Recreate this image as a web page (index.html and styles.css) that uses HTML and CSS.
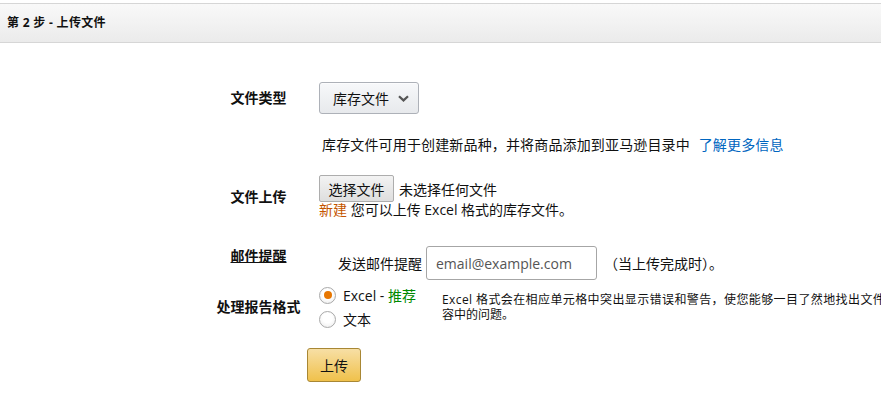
FILE: index.html
```html
<!DOCTYPE html>
<html lang="zh-CN">
<head>
<meta charset="utf-8">
<title>上传文件</title>
<link rel="stylesheet" href="styles.css">
</head>
<body>
<div class="page">
  <div class="step-header">第 2 步 - 上传文件</div>
  <form class="upload-form">
    <div class="label row-type">文件类型</div>
    <div class="value row-type">
      <button type="button" class="select-btn">库存文件
        <svg class="chevron" width="11" height="7" viewBox="0 0 11 7"><path d="M1 1.2 L5.5 5.4 L10 1.2" fill="none" stroke="#555" stroke-width="2.2"/></svg>
      </button>
    </div>

    <div class="label row-desc"></div>
    <div class="value row-desc desc">库存文件可用于创建新品种，并将商品添加到亚马逊目录中 <a class="link" href="#">了解更多信息</a></div>

    <div class="label row-file">文件上传</div>
    <div class="value row-file">
      <div class="file-line"><button type="button" class="file-btn">选择文件</button><span class="file-status">未选择任何文件</span></div>
      <div class="file-note"><span class="new">新建</span> 您可以上传 Excel 格式的库存文件。</div>
    </div>

    <div class="label row-mail"><span class="underlined">邮件提醒</span></div>
    <div class="value row-mail mail-line">
      <span class="mail-text">发送邮件提醒</span>
      <input class="mail-input" type="text" placeholder="email@example.com">
      <span class="mail-after">（当上传完成时）。</span>
    </div>

    <div class="label row-format">处理报告格式</div>
    <div class="value row-format format">
      <div class="radios">
        <label class="radio-line"><span class="radio checked"></span><span>Excel - <span class="rec">推荐</span></span></label>
        <label class="radio-line"><span class="radio"></span><span>文本</span></label>
      </div>
      <div class="format-desc"><span class="desc-first">Excel 格式会在相应单元格中突出显示错误和警告，使您能够一目了然地找出文件内</span><br>容中的问题。</div>
    </div>

    <div class="value row-submit">
      <button type="button" class="upload-btn">上传</button>
    </div>
  </form>
</div>
</body>
</html>
```

FILE: styles.css
```css
html, body {
  margin: 0;
  padding: 0;
  background: #fff;
  overflow: hidden;
}
body {
  font-family: "Open Sans", "Noto Sans CJK SC", sans-serif;
  font-size: 14px;
  color: #111;
}
.page {
  padding-top: 3px;
  width: 881px;
  overflow: hidden;
}
.step-header {
  height: 38px;
  line-height: 38px;
  border-top: 1px solid #d6d6d6;
  border-bottom: 1px solid #d6d6d6;
  background: linear-gradient(#f9f9f9, #ebebeb);
  padding-left: 7px;
  font-size: 12px;
  font-weight: bold;
  letter-spacing: 0.3px;
  width: 1000px;
}
.upload-form {
  display: grid;
  grid-template-columns: 119px auto;
  padding-left: 199px;
  margin-top: 39px;
  align-items: center;
}
.label {
  grid-column: 1;
  text-align: center;
  font-weight: bold;
  font-size: 14px;
  line-height: 20px;
}
.value {
  grid-column: 2;
  padding-left: 1px;
}
.select-btn {
  display: flex;
  align-items: center;
  height: 32px;
  width: 100px;
  padding: 0 0 0 13px;
  border: 1px solid #adb1b8;
  border-radius: 3px;
  background: linear-gradient(#f7f8fa, #e7e9ec);
  font-family: inherit;
  font-size: 14px;
  color: #111;
  gap: 9px;
  box-shadow: 0 1px 0 rgba(255,255,255,.6) inset;
}
.chevron {
  display: block;
}
.row-desc {
  margin-top: 21px;
  line-height: 20px;
}
.desc {
  padding-left: 4px;
  letter-spacing: 0.15px;
}
.link {
  color: #0066c0;
  text-decoration: none;
  margin-left: 5px;
}
.row-file {
  margin-top: 20px;
}
.file-line {
  display: flex;
  align-items: center;
  height: 27px;
}
.file-btn {
  height: 27px;
  width: 75px;
  padding: 0;
  border: 1px solid #adadad;
  border-radius: 2px;
  background: linear-gradient(#f3f3f3, #dedede);
  font-family: inherit;
  font-size: 14px;
  color: #111;
}
.file-status {
  margin-left: 5px;
}
.file-note {
  line-height: 16px;
}
.new {
  color: #c45500;
}
.row-mail {
  margin-top: 28px;
}
.label.row-mail {
  align-self: start;
  padding-top: 0;
}
.underlined {
  text-decoration: underline;
}
.mail-line {
  display: flex;
  align-items: center;
}
.mail-text {
  margin-left: 19px;
}
.mail-input {
  box-sizing: border-box;
  width: 171px;
  height: 34px;
  margin-left: 4px;
  padding: 0 9px;
  border: 1px solid #a6a6a6;
  border-radius: 3px;
  font-family: "Open Sans", sans-serif;
  font-size: 14px;
  color: #111;
}
.mail-input::placeholder {
  color: #555;
}
.mail-after {
  margin-left: 7px;
}
.row-format {
  margin-top: 3px;
}
.format {
  display: flex;
  align-items: center;
}
.radios {
  width: 123px;
  flex: none;
}
.radio-line {
  display: flex;
  align-items: center;
  height: 24px;
  gap: 7px;
}
.radio {
  box-sizing: border-box;
  width: 17px;
  height: 17px;
  border-radius: 50%;
  border: 1px solid #a9a9a9;
  background: radial-gradient(circle at 50% 40%, #fff 40%, #e9e9e9 100%);
  position: relative;
  flex: none;
}
.radio.checked::after {
  content: "";
  position: absolute;
  left: 3.5px;
  top: 3.5px;
  width: 8px;
  height: 8px;
  border-radius: 50%;
  background: #e77600;
}
.rec {
  color: #008a00;
}
.format-desc {
  font-size: 12px;
  line-height: 15px;
  white-space: nowrap;
}
.desc-first {
  letter-spacing: 0.4px;
}
.row-submit {
  margin-top: 17px;
}
.upload-btn {
  margin-left: -12px;
  width: 54px;
  height: 34px;
  padding: 0;
  border: 1px solid #a88734;
  border-radius: 3px;
  background: linear-gradient(#f7dfa5, #f0c14b);
  font-family: inherit;
  font-size: 14px;
  color: #111;
}
```
